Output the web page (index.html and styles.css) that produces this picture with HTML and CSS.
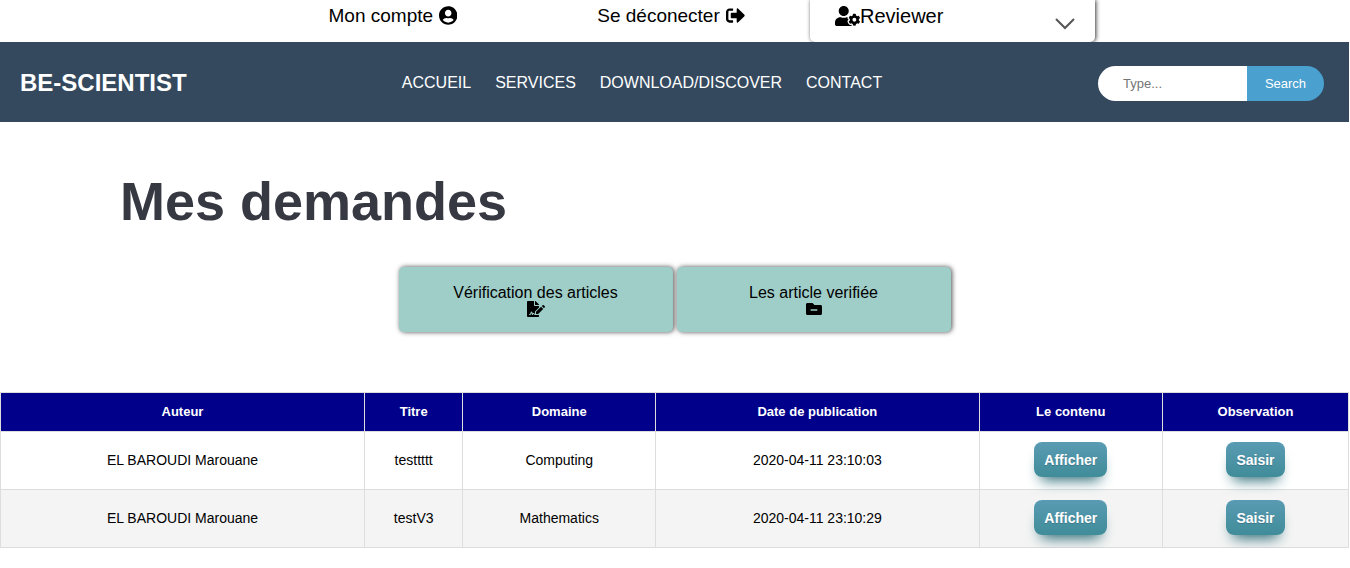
FILE: index.html
```html
<!DOCTYPE html>
<html lang="fr">
<head>
<meta charset="utf-8">
<meta name="viewport" content="width=device-width, initial-scale=1">
<title>BE-SCIENTIST</title>
<link rel="stylesheet" href="styles.css">
</head>
<body>
<div class="topbar">
  <div class="topbar-inner">
    <a class="top-link" href="#">Mon compte
      <svg class="icon icon-account" viewBox="0 0 496 512" aria-hidden="true"><path d="M248 8C111 8 0 119 0 256s111 248 248 248 248-111 248-248S385 8 248 8zm0 96c48.600 0 88 39.400 88 88s-39.400 88-88 88-88-39.400-88-88 39.400-88 88-88zm0 344c-58.700 0-111.300-26.600-146.500-68.200 18.800-35.400 55.600-59.800 98.500-59.800 2.400 0 4.800.4 7.100 1.100 13 4.200 26.600 6.900 40.900 6.900 14.300 0 28-2.700 40.900-6.900 2.300-.7 4.700-1.100 7.100-1.100 42.900 0 79.700 24.400 98.500 59.800C359.300 421.400 306.700 448 248 448z"/></svg></a>
    <a class="top-link" href="#">Se déconecter
      <svg class="icon icon-account" viewBox="0 0 512 512" aria-hidden="true"><path d="M497 273L329 441c-15 15-41 4.500-41-17v-96H152c-13.300 0-24-10.700-24-24v-96c0-13.300 10.700-24 24-24h136V88c0-21.400 25.900-32 41-17l168 168c9.300 9.400 9.300 24.600 0 34zM192 436v-40c0-6.600-5.400-12-12-12H96c-17.700 0-32-14.300-32-32V160c0-17.700 14.300-32 32-32h84c6.600 0 12-5.400 12-12V76c0-6.600-5.400-12-12-12H96c-53 0-96 43-96 96v192c0 53 43 96 96 96h84c6.600 0 12-5.400 12-12z"/></svg></a>
    <button class="role" type="button" aria-haspopup="true">
      <svg class="icon icon-role" viewBox="0 0 640 512" aria-hidden="true"><path d="M610.5 373.3c2.6-14.1 2.6-28.5 0-42.6l25.8-14.9c3-1.7 4.3-5.2 3.3-8.5-6.7-21.6-18.2-41.2-33.2-57.4-2.3-2.5-6-3.1-9-1.4l-25.8 14.9c-10.9-9.3-23.4-16.5-36.900-21.300v-29.800c0-3.400-2.400-6.400-5.700-7.100-22.300-5-45-4.800-66.200 0-3.300.7-5.700 3.700-5.700 7.100v29.800c-13.500 4.800-26 12-36.900 21.300l-25.800-14.900c-2.900-1.700-6.700-1.100-9 1.400-15 16.200-26.500 35.800-33.200 57.400-1 3.300.4 6.800 3.300 8.500l25.800 14.900c-2.600 14.100-2.600 28.500 0 42.600l-25.800 14.900c-3 1.700-4.300 5.200-3.300 8.500 6.700 21.600 18.200 41.100 33.200 57.400 2.300 2.500 6 3.100 9 1.400l25.800-14.900c10.900 9.300 23.400 16.500 36.900 21.300v29.800c0 3.400 2.400 6.400 5.700 7.100 22.300 5 45 4.800 66.200 0 3.300-.7 5.700-3.700 5.700-7.100v-29.800c13.500-4.800 26-12 36.900-21.300l25.800 14.900c2.900 1.700 6.700 1.100 9-1.400 15-16.200 26.500-35.800 33.200-57.400 1-3.300-.4-6.800-3.300-8.500l-25.800-14.900zM496 400.500c-26.800 0-48.500-21.800-48.500-48.500s21.800-48.500 48.500-48.500 48.500 21.800 48.500 48.500-21.700 48.500-48.500 48.500zM224 256c70.700 0 128-57.300 128-128S294.700 0 224 0 96 57.300 96 128s57.300 128 128 128zm201.200 226.500c-2.300-1.200-4.600-2.600-6.800-3.900l-7.900 4.600c-6 3.400-12.800 5.300-19.600 5.300-10.900 0-21.400-4.600-28.900-12.600-18.300-19.800-32.300-43.900-40.200-69.600-5.500-17.700 1.900-36.400 17.900-45.700l7.900-4.600c-.1-2.600-.1-5.200 0-7.800l-7.900-4.600c-16-9.200-23.400-28-17.900-45.700.9-2.900 2.200-5.800 3.200-8.700-3.800-.3-7.500-1.200-11.400-1.200h-16.700c-22.200 10.200-46.900 16-72.900 16s-50.600-5.800-72.900-16h-16.700C60.200 288 0 348.200 0 422.400V464c0 26.500 21.500 48 48 48h352c10.100 0 19.500-3.200 27.200-8.500-1.200-3.800-2-7.700-2-11.800v-9.200z"/></svg>
      <span>Reviewer</span>
      <svg class="chevron" viewBox="0 0 20 12" aria-hidden="true"><path d="M1 1l9 9 9-9"/></svg>
    </button>
  </div>
</div>

<header class="navbar">
  <a class="brand" href="#">BE-SCIENTIST</a>
  <nav class="menu">
    <a href="#">ACCUEIL</a>
    <a href="#">SERVICES</a>
    <a href="#">DOWNLOAD/DISCOVER</a>
    <a href="#">CONTACT</a>
  </nav>
  <form class="search">
    <input class="search-input" type="text" placeholder="Type..." aria-label="Type...">
    <button class="search-button" type="button">Search</button>
  </form>
</header>

<main>
  <h1 class="title">Mes demandes</h1>

  <div class="cards">
    <a class="card" href="#">
      <span>Vérification des articles</span>
      <svg class="icon icon-card" viewBox="0 0 576 512" aria-hidden="true"><path d="M218.170 424.140c-2.950-5.920-8.090-6.520-10.170-6.520s-7.220.59-10.020 6.190l-7.670 15.340c-6.370 12.780-25.030 11.370-29.480-2.090L144 386.590l-10.610 31.880c-5.890 17.660-22.380 29.530-41 29.530H80c-8.840 0-16-7.160-16-16s7.160-16 16-16h12.390c4.830 0 9.110-3.080 10.640-7.660l18.190-54.640c3.300-9.810 12.440-16.410 22.780-16.410s19.480 6.590 22.770 16.410l13.880 41.640c19.750-16.190 54.060-9.700 66 14.160 1.890 3.780 5.490 5.950 9.360 6.260v-82.120l128-127.090V160H248c-13.200 0-24-10.800-24-24V0H24C10.700 0 0 10.700 0 24v464c0 13.300 10.700 24 24 24h336c13.300 0 24-10.700 24-24v-40l-128-.11c-16.120-.31-30.580-9.280-37.830-23.750zM384 121.900c0-6.300-2.500-12.400-7-16.900L279.100 7c-4.500-4.500-10.600-7-17-7H256v128h128v-6.100zm-96 225.060V416h68.990l161.680-162.780-67.880-67.880L288 346.960zm280.540-179.630l-31.870-31.870c-9.940-9.940-26.070-9.940-36.010 0l-27.250 27.250 67.880 67.880 27.250-27.250c9.950-9.940 9.950-26.070 0-36.010z"/></svg>
    </a>
    <a class="card" href="#">
      <span>Les article verifiée</span>
      <svg class="icon icon-card" viewBox="0 0 512 512" aria-hidden="true"><path d="M464 128H272l-64-64H48C21.500 64 0 85.500 0 112v288c0 26.500 21.500 48 48 48h416c26.500 0 48-21.500 48-48V176c0-26.500-21.500-48-48-48zm-96 168c0 8.800-7.200 16-16 16H160c-8.800 0-16-7.200-16-16v-16c0-8.800 7.200-16 16-16h192c8.800 0 16 7.200 16 16v16z"/></svg>
    </a>
  </div>

  <table class="requests">
    <colgroup>
      <col class="col-author"><col class="col-title"><col class="col-domain"><col class="col-date"><col class="col-content"><col class="col-note">
    </colgroup>
    <thead>
      <tr><th>Auteur</th><th>Titre</th><th>Domaine</th><th>Date de publication</th><th>Le contenu</th><th>Observation</th></tr>
    </thead>
    <tbody>
      <tr>
        <td>EL BAROUDI Marouane</td><td>testtttt</td><td>Computing</td><td>2020-04-11 23:10:03</td>
        <td><button class="action" type="button">Afficher</button></td>
        <td><button class="action" type="button">Saisir</button></td>
      </tr>
      <tr>
        <td>EL BAROUDI Marouane</td><td>testV3</td><td>Mathematics</td><td>2020-04-11 23:10:29</td>
        <td><button class="action" type="button">Afficher</button></td>
        <td><button class="action" type="button">Saisir</button></td>
      </tr>
    </tbody>
  </table>
</main>
</body>
</html>
```
FILE: styles.css
```css
* {
  box-sizing: border-box;
}

body {
  margin: 0 1px 0 0;
  background: #fff;
  color: #000;
  font-family: "Liberation Sans", Arial, sans-serif;
  font-size: 16px;
}

a {
  color: inherit;
  text-decoration: none;
}

button,
input {
  border: 0;
  font-family: inherit;
}

.icon {
  display: block;
  fill: currentColor;
}

/* Account bar */
.topbar {
  overflow: hidden;
}

.topbar-inner {
  display: grid;
  grid-template-columns: 278fr 278fr 285fr;
  max-width: 841px;
  margin: 0 auto;
}

.top-link {
  display: flex;
  justify-content: center;
  align-items: center;
  gap: 6px;
  height: 31px;
  font-size: 19px;
}

.icon-account {
  height: 19px;
}

.role {
  display: flex;
  align-items: center;
  height: 42px;
  padding: 0 20px 10px 25px;
  border-radius: 0 0 5px 5px;
  background: #fff;
  box-shadow: 1px 0 4px rgba(0, 0, 0, 0.8);
  color: #000;
  font-size: 20px;
}

.icon-role {
  height: 20px;
}

.chevron {
  align-self: flex-end;
  width: 20px;
  height: 12px;
  margin: 0 0 2px auto;
  fill: none;
  stroke: #555;
  stroke-width: 2;
}

/* Navigation */
.navbar {
  display: grid;
  grid-template-columns: 1fr auto 1fr;
  align-items: center;
  height: 80px;
  padding: 2px 25px 0 20px;
  background: #34495e;
  color: #fff;
}

.brand {
  font-size: 24px;
  font-weight: bold;
}

.menu {
  display: flex;
  gap: 24px;
  margin-right: 60px;
}

.search {
  display: flex;
  justify-self: end;
}

.search-input {
  width: 149px;
  height: 35px;
  padding: 0 25px;
  border-radius: 18px 0 0 18px;
  background: #fff;
  font-size: 13px;
}

.search-input::placeholder {
  color: #757575;
}

.search-button {
  width: 77px;
  height: 35px;
  padding: 0;
  border-radius: 0 18px 18px 0;
  background: #4aa0ce;
  color: #fff;
  font-size: 13px;
}

/* Content */
.title {
  margin: 48px 0 35px 120px;
  color: #363842;
  font-size: 54px;
  line-height: 62px;
}

.cards {
  display: flex;
  justify-content: center;
  gap: 4px;
  margin-bottom: 60px;
}

.card {
  display: flex;
  flex-direction: column;
  align-items: center;
  width: 274px;
  padding: 17px 16px 15px;
  border-radius: 5px;
  background: #9fcdc8;
  box-shadow: 1px 0 5px rgba(0, 0, 0, 0.7);
  line-height: 17px;
}

.icon-card {
  height: 16px;
}

/* Requests table */
.requests {
  width: 100%;
  table-layout: fixed;
  border-collapse: collapse;
  text-align: center;
  font-size: 14px;
}

.col-author { width: 27%; }
.col-title { width: 7.3%; }
.col-domain { width: 14.3%; }
.col-date { width: 24%; }
.col-content { width: 13.6%; }
.col-note { width: 13.8%; }

.requests th,
.requests td {
  padding: 0 8px 2px;
  border: 1px solid #ddd;
}

.requests th {
  height: 39px;
  background: #00008b;
  color: #fff;
  font-size: 13px;
}

.requests td {
  height: 58px;
}

.requests tbody tr:nth-child(even) {
  background: #f4f4f4;
}

.action {
  height: 35px;
  padding: 0 10px;
  border-radius: 8px;
  background: linear-gradient(#599bb3, #408c99);
  box-shadow: 0 10px 14px -7px #276873;
  color: #fff;
  font-size: 14px;
  font-weight: bold;
  text-shadow: 0 1px 0 #3d768a;
  vertical-align: middle;
}
```
